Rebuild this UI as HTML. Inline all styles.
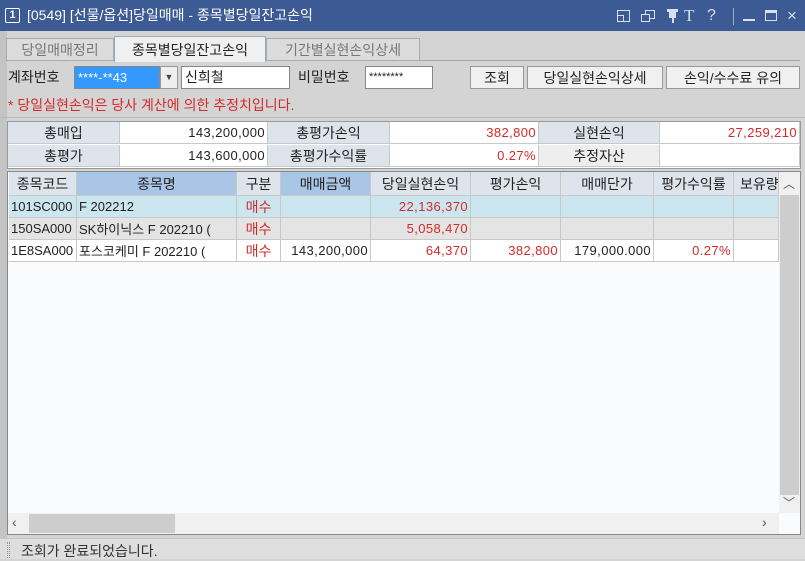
<!DOCTYPE html>
<html><head><meta charset="utf-8"><style>
*{margin:0;padding:0;box-sizing:border-box}
body{width:805px;height:559px;background:#d4d4d4;font-family:"Liberation Sans","Noto Sans CJK KR","NanumGothic",sans-serif;font-size:13px;color:#222;position:relative;overflow:hidden}
.a{position:absolute}
.title{left:0;top:0;width:805px;height:31px;background:#3c5a94;color:#fff;font-size:14px;line-height:31px}
.ic{position:absolute;top:0;color:#d8dff0;font-size:15px;line-height:31px}
.red{color:#d42a2a}
.btn{position:absolute;top:66px;height:23px;background:#f0f0f0;border:1px solid #999;display:flex;align-items:center;justify-content:center;font-size:13px}
.row{position:absolute;left:9px;width:770px;height:22px}
.cell{position:absolute;top:0;height:100%;border-right:1px solid #c8c8c8;border-bottom:1px solid #c8c8c8;display:flex;align-items:center;padding:0 2px;white-space:nowrap;overflow:hidden}
.n{letter-spacing:0.4px}
</style></head><body>
<div class="a title">
 <span class="a" style="left:5px;top:8px;width:15px;height:15px;border:1.5px solid #fff;border-radius:2px;font-size:11px;line-height:12px;text-align:center;font-weight:bold">1</span>
 <span class="a" style="left:27px">[0549] [선물/옵션]당일매매 - 종목별당일잔고손익</span>
 <span class="a" style="left:617px;top:10px;width:13px;height:12px;border:1.5px solid #d8dff0"></span>
 <span class="a" style="left:617px;top:15px;width:7px;height:7px;border:1.5px solid #d8dff0"></span>
 <span class="a" style="left:645px;top:10px;width:10px;height:9px;border:1.5px solid #d8dff0"></span>
 <span class="a" style="left:641px;top:14px;width:9px;height:8px;border:1.5px solid #d8dff0;background:#3c5a94"></span>
 <span class="a" style="left:667px;top:9px;width:11px;height:3px;background:#d8dff0"></span>
 <span class="a" style="left:669px;top:11px;width:7px;height:7px;background:#d8dff0"></span>
 <span class="a" style="left:672px;top:17px;width:1.5px;height:6px;background:#d8dff0"></span>
 <span class="ic" style="left:684px;font-family:'Liberation Serif',serif;font-size:17px">T</span>
 <span class="ic" style="left:707px;font-size:16px">?</span>
 <span class="a" style="left:733px;top:8px;width:1px;height:17px;background:#aab"></span>
 <span class="a" style="left:743px;top:19px;width:12px;height:2px;background:#d8dff0"></span>
 <span class="a" style="left:765px;top:10px;width:12px;height:11px;border:1.5px solid #d8dff0;border-top-width:3px"></span>
 <span class="ic" style="left:787px;font-size:17px">×</span>
</div>
<div class="a" style="left:0;top:31px;width:7px;height:507px;background:#c4c4c4"></div>
<div class="a" style="left:6px;top:36px;width:794px;height:25px;border-bottom:1px solid #9ab"></div>
<div class="a" style="left:6px;top:38px;width:108px;height:23px;background:#dcdcdc;border:1px solid #aaa;color:#777;display:flex;align-items:center;justify-content:center;font-size:14px">당일매매정리</div>
<div class="a" style="left:114px;top:36px;width:152px;height:26px;background:#f0f0f0;border:1px solid #9ab;border-bottom:none;display:flex;align-items:center;justify-content:center;font-size:14px">종목별당일잔고손익</div>
<div class="a" style="left:266px;top:38px;width:154px;height:23px;background:#dcdcdc;border:1px solid #aaa;color:#777;display:flex;align-items:center;justify-content:center;font-size:14px">기간별실현손익상세</div>
<div class="a" style="left:8px;top:67px;font-size:14px">계좌번호</div>
<div class="a" style="left:74px;top:66px;width:86px;height:23px;background:#3399ff;color:#fff;border:1px solid #888;padding-left:3px;line-height:21px;font-size:13px">****-**43</div>
<div class="a" style="left:160px;top:66px;width:18px;height:23px;background:#eee;border:1px solid #999;font-size:9px;text-align:center;line-height:21px;color:#444">▼</div>
<div class="a" style="left:181px;top:66px;width:109px;height:23px;background:#fff;border:1px solid #888;padding-left:3px;line-height:21px;font-size:14px">신희철</div>
<div class="a" style="left:298px;top:67px;font-size:14px">비밀번호</div>
<div class="a" style="left:365px;top:66px;width:68px;height:23px;background:#fff;border:1px solid #888;padding-left:3px;line-height:21px;font-size:11px">********</div>
<div class="btn" style="left:470px;width:54px;font-size:14px">조회</div>
<div class="btn" style="left:527px;width:136px;font-size:14px">당일실현손익상세</div>
<div class="btn" style="left:666px;width:134px;font-size:14px">손익/수수료 유의</div>
<div class="a red" style="left:8px;top:95px;font-size:14px">* 당일실현손익은 당사 계산에 의한 추정치입니다.</div>
<div class="a" style="left:0;top:117px;width:805px;height:1px;background:#bbb"></div>
<div class="a" style="left:7px;top:121px;width:794px;height:48px;border:1px solid #999;background:#fff">
 <div class="row" style="left:0;top:0;width:792px">
  <div class="cell" style="left:0;width:112px;background:#dde4ec;justify-content:center;font-size:14px">총매입</div>
  <div class="cell n" style="left:112px;width:148px;justify-content:flex-end">143,200,000</div>
  <div class="cell" style="left:260px;width:122px;background:#dde4ec;justify-content:center;font-size:14px">총평가손익</div>
  <div class="cell red n" style="left:382px;width:149px;justify-content:flex-end">382,800</div>
  <div class="cell" style="left:531px;width:121px;background:#dde4ec;justify-content:center;font-size:14px">실현손익</div>
  <div class="cell red n" style="left:652px;width:140px;justify-content:flex-end">27,259,210</div>
 </div>
 <div class="row" style="left:0;top:23px;width:792px">
  <div class="cell" style="left:0;width:112px;background:#dde4ec;justify-content:center;font-size:14px">총평가</div>
  <div class="cell n" style="left:112px;width:148px;justify-content:flex-end">143,600,000</div>
  <div class="cell" style="left:260px;width:122px;background:#dde4ec;justify-content:center;font-size:14px">총평가수익률</div>
  <div class="cell red n" style="left:382px;width:149px;justify-content:flex-end">0.27%</div>
  <div class="cell" style="left:531px;width:121px;background:#eee;justify-content:center;font-size:14px">추정자산</div>
  <div class="cell" style="left:652px;width:140px"></div>
 </div>
</div>
<div class="a" style="left:7px;top:171px;width:794px;height:364px;border:1px solid #888;background:#fafbfd"></div>
<div class="row" style="top:172px;height:24px">
 <div class="cell" style="left:0;width:68px;background:#dde4ec;justify-content:center;font-size:14px">종목코드</div>
 <div class="cell" style="left:68px;width:160px;background:#a9c6e6;justify-content:center;font-size:14px">종목명</div>
 <div class="cell" style="left:228px;width:44px;background:#dde4ec;justify-content:center;font-size:14px">구분</div>
 <div class="cell" style="left:272px;width:90px;background:#a9c6e6;justify-content:center;font-size:14px">매매금액</div>
 <div class="cell" style="left:362px;width:100px;background:#dde4ec;justify-content:center;font-size:14px">당일실현손익</div>
 <div class="cell" style="left:462px;width:90px;background:#dde4ec;justify-content:center;font-size:14px">평가손익</div>
 <div class="cell" style="left:552px;width:93px;background:#dde4ec;justify-content:center;font-size:14px">매매단가</div>
 <div class="cell" style="left:645px;width:80px;background:#dde4ec;justify-content:center;font-size:14px">평가수익률</div>
 <div class="cell" style="left:725px;width:45px;background:#dde4ec;font-size:14px;padding-left:6px">보유량</div>
</div>
<div class="row" style="top:196px;background:#cce6f0">
 <div class="cell" style="left:0;width:68px">101SC000</div>
 <div class="cell" style="left:68px;width:160px">F 202212</div>
 <div class="cell red" style="left:228px;width:44px;justify-content:center;font-size:14px">매수</div>
 <div class="cell" style="left:272px;width:90px"></div>
 <div class="cell red n" style="left:362px;width:100px;justify-content:flex-end">22,136,370</div>
 <div class="cell" style="left:462px;width:90px"></div><div class="cell" style="left:552px;width:93px"></div><div class="cell" style="left:645px;width:80px"></div><div class="cell" style="left:725px;width:45px"></div>
</div>
<div class="row" style="top:218px;background:#e4e4e4">
 <div class="cell" style="left:0;width:68px">150SA000</div>
 <div class="cell" style="left:68px;width:160px">SK하이닉스 F 202210 (</div>
 <div class="cell red" style="left:228px;width:44px;justify-content:center;font-size:14px">매수</div>
 <div class="cell" style="left:272px;width:90px"></div>
 <div class="cell red n" style="left:362px;width:100px;justify-content:flex-end">5,058,470</div>
 <div class="cell" style="left:462px;width:90px"></div><div class="cell" style="left:552px;width:93px"></div><div class="cell" style="left:645px;width:80px"></div><div class="cell" style="left:725px;width:45px"></div>
</div>
<div class="row" style="top:240px;background:#fff">
 <div class="cell" style="left:0;width:68px">1E8SA000</div>
 <div class="cell" style="left:68px;width:160px">포스코케미 F 202210 (</div>
 <div class="cell red" style="left:228px;width:44px;justify-content:center;font-size:14px">매수</div>
 <div class="cell n" style="left:272px;width:90px;justify-content:flex-end">143,200,000</div>
 <div class="cell red n" style="left:362px;width:100px;justify-content:flex-end">64,370</div>
 <div class="cell red n" style="left:462px;width:90px;justify-content:flex-end">382,800</div>
 <div class="cell n" style="left:552px;width:93px;justify-content:flex-end">179,000.000</div>
 <div class="cell red n" style="left:645px;width:80px;justify-content:flex-end">0.27%</div>
 <div class="cell" style="left:725px;width:45px"></div>
</div>
<div class="a" style="left:779px;top:172px;width:21px;height:341px;background:#f0f0f0"></div>
<div class="a" style="left:780px;top:195px;width:19px;height:300px;background:#cdcdcd"></div>
<div class="a" style="left:783px;top:175px;font-size:12px;color:#555">︿</div>
<div class="a" style="left:783px;top:494px;font-size:12px;color:#555">﹀</div>
<div class="a" style="left:8px;top:513px;width:771px;height:21px;background:#f0f0f0"></div>
<div class="a" style="left:29px;top:514px;width:146px;height:19px;background:#cdcdcd"></div>
<div class="a" style="left:12px;top:514px;font-size:14px;color:#555">‹</div>
<div class="a" style="left:762px;top:514px;font-size:14px;color:#555">›</div>
<div class="a" style="left:0;top:538px;width:805px;height:21px;background:#dedede;border-top:1px solid #c8c8c8"></div>
<div class="a" style="left:7px;top:542px;width:3px;height:16px;border-left:1px dotted #999;border-right:1px dotted #999"></div>
<div class="a" style="left:21px;top:541px;font-size:14px;color:#333">조회가 완료되었습니다.</div>
</body></html>
